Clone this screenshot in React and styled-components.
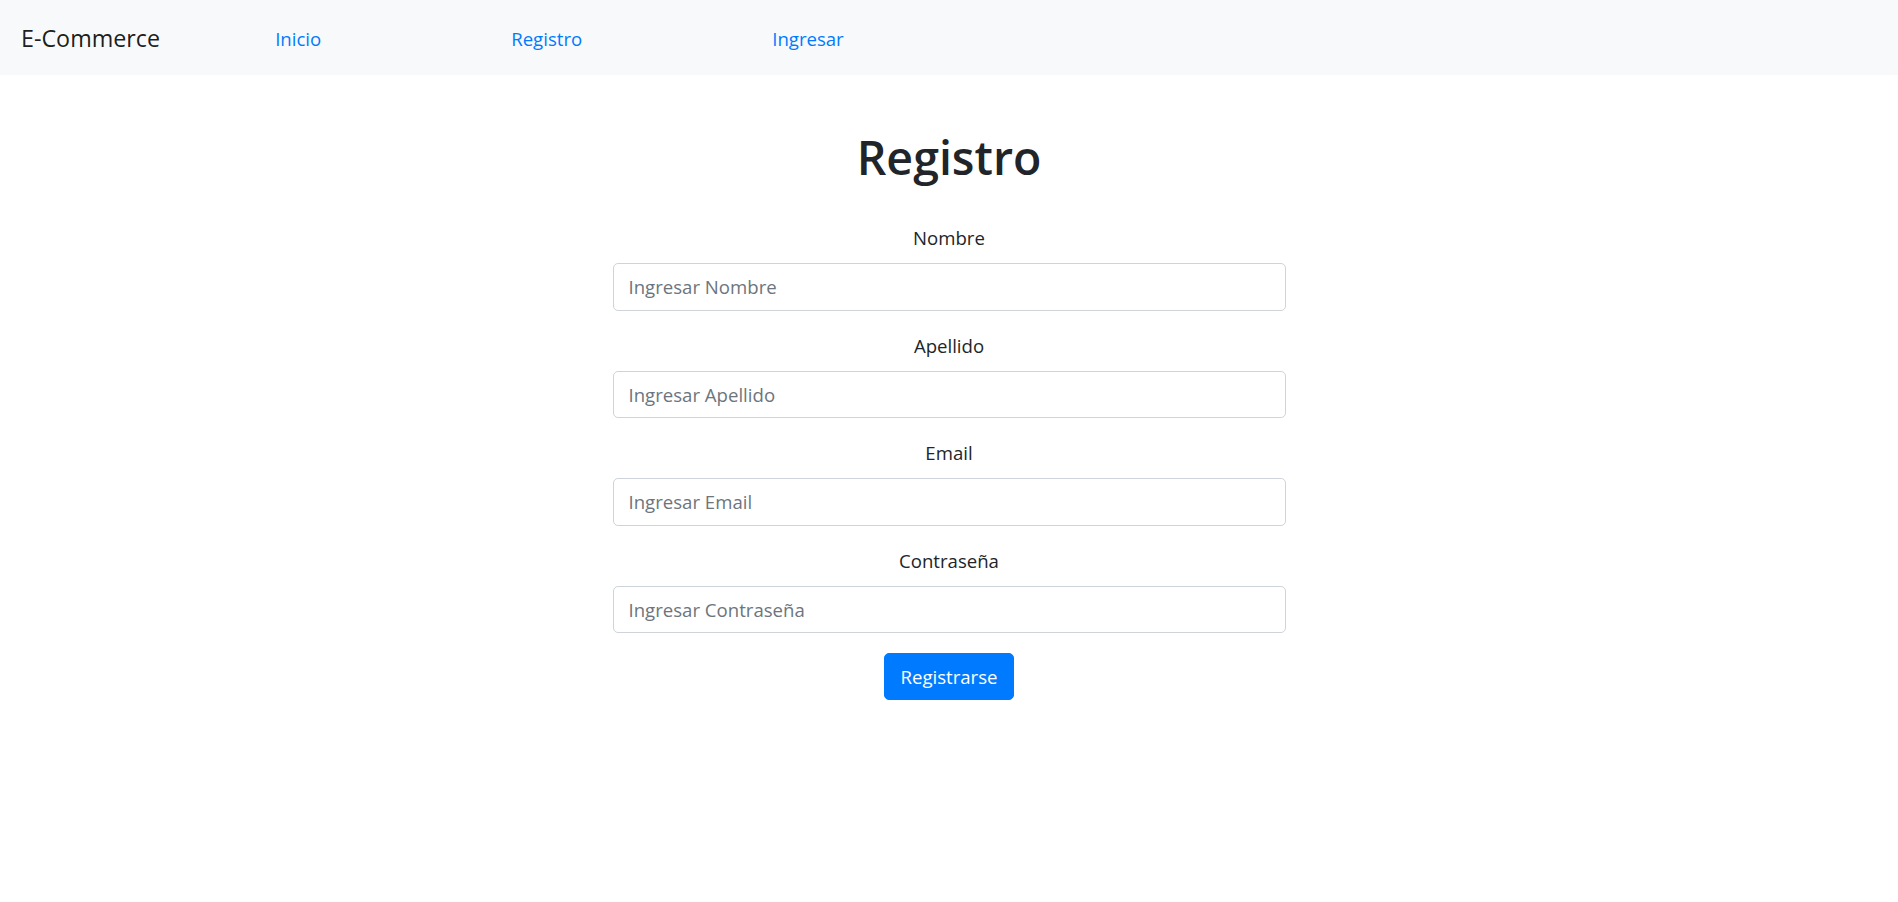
import React from "react";
import styled, { createGlobalStyle } from "styled-components";

const GlobalStyle = createGlobalStyle`
  * { box-sizing: border-box; }
  html, body { margin: 0; padding: 0; background: #ffffff; }
  body {
    font-family: "Open Sans", "Noto Sans", sans-serif;
    color: #212529;
    font-size: 18.6px;
    line-height: 30px;
  }
`;

const NavBar = styled.nav`
  height: 75px;
  background: #f8f9fa;
  display: flex;
  align-items: center;
  padding: 2px 20px 0 21px;
`;

const Brand = styled.a`
  font-size: 23.3px;
  line-height: 37px;
  color: rgba(0, 0, 0, 0.9);
  text-decoration: none;
  margin-right: 115px;
`;

const NavLinks = styled.div`
  display: flex;
  align-items: center;
  gap: 190px;
`;

const NavLink = styled.a`
  font-size: 18.6px;
  line-height: 30px;
  color: #007bff;
  text-decoration: none;
`;

const Main = styled.main`
  display: flex;
  flex-direction: column;
  align-items: center;
  padding-top: 52px;
`;

const Title = styled.h1`
  margin: 0 0 36px;
  font-size: 46.5px;
  line-height: 60px;
  font-weight: 600;
  color: #212529;
  text-align: center;
`;

const Form = styled.form`
  width: 673px;
  display: flex;
  flex-direction: column;
  align-items: stretch;
`;

const Group = styled.div`
  margin-bottom: 20px;
  display: flex;
  flex-direction: column;
`;

const Label = styled.label`
  display: block;
  text-align: center;
  font-size: 18.6px;
  line-height: 30px;
  margin-bottom: 10px;
  color: #212529;
`;

const Input = styled.input`
  display: block;
  width: 100%;
  height: 47.5px;
  padding: 7.5px 15px;
  font-family: "Open Sans", "Noto Sans", sans-serif;
  font-size: 18.6px;
  line-height: 30px;
  color: #495057;
  background: #ffffff;
  border: 1px solid #ced4da;
  border-radius: 5px;
  outline: none;
  &::placeholder {
    color: #6c757d;
    opacity: 1;
  }
`;

const Actions = styled.div`
  display: flex;
  justify-content: center;
`;

const Button = styled.button`
  font-family: "Open Sans", "Noto Sans", sans-serif;
  font-size: 18.6px;
  line-height: 30px;
  padding: 7.5px 15px;
  color: #ffffff;
  background: #007bff;
  border: 1px solid #007bff;
  border-radius: 5px;
  cursor: pointer;
`;

const fields = [
  { id: "nombre", label: "Nombre", placeholder: "Ingresar Nombre", type: "text" },
  { id: "apellido", label: "Apellido", placeholder: "Ingresar Apellido", type: "text" },
  { id: "email", label: "Email", placeholder: "Ingresar Email", type: "email" },
  { id: "password", label: "Contraseña", placeholder: "Ingresar Contraseña", type: "password" },
];

export default function App() {
  return (
    <>
      <GlobalStyle />
      <NavBar>
        <Brand href="#">E-Commerce</Brand>
        <NavLinks>
          <NavLink href="#">Inicio</NavLink>
          <NavLink href="#">Registro</NavLink>
          <NavLink href="#">Ingresar</NavLink>
        </NavLinks>
      </NavBar>
      <Main>
        <Title>Registro</Title>
        <Form onSubmit={(e) => e.preventDefault()}>
          {fields.map((f) => (
            <Group key={f.id}>
              <Label htmlFor={f.id}>{f.label}</Label>
              <Input id={f.id} type={f.type} placeholder={f.placeholder} />
            </Group>
          ))}
          <Actions>
            <Button type="submit">Registrarse</Button>
          </Actions>
        </Form>
      </Main>
    </>
  );
}
